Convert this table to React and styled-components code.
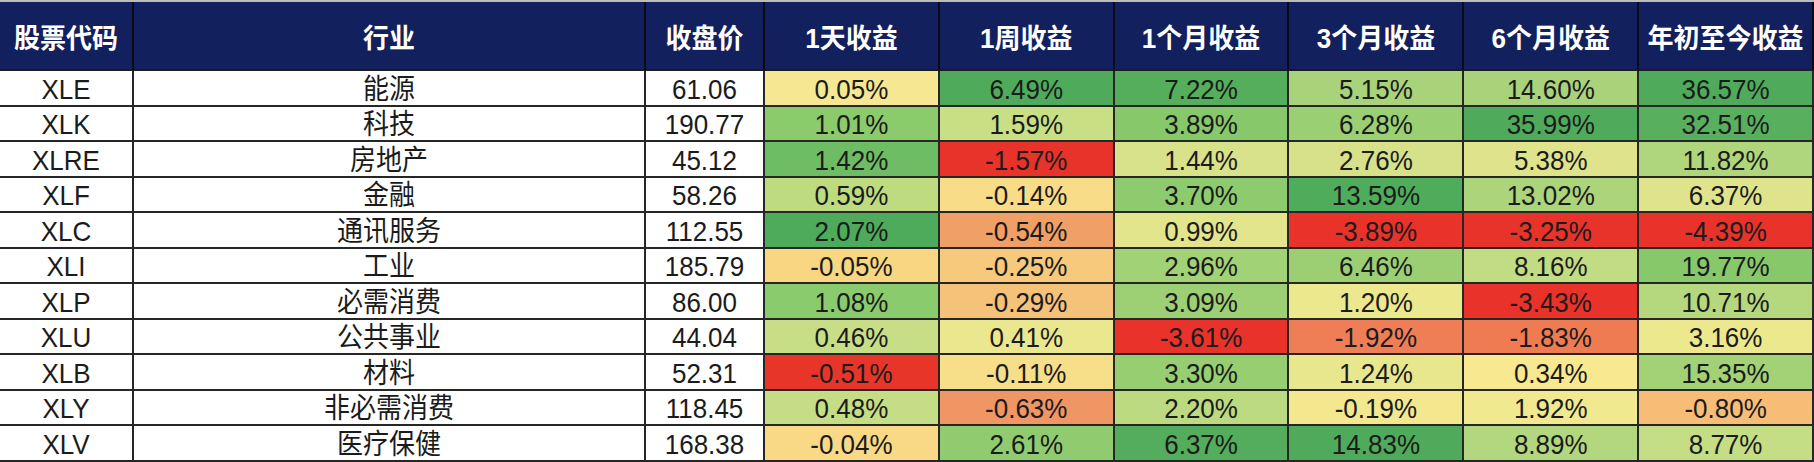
import styled, { createGlobalStyle } from "styled-components";

const GlobalStyle = createGlobalStyle`
  html, body {
    margin: 0;
    padding: 0;
    background: #ffffff;
    overflow: hidden;
  }
  body {
    font-family: "Liberation Sans", "Noto Sans CJK SC", sans-serif;
  }
`;

const COLS = "134px 512px 119px repeat(6, 1fr)";

const Table = styled.div`
  width: 1814px;
  display: flex;
  flex-direction: column;
  border-top: 2px solid #bdbdbd;
`;

const Row = styled.div`
  display: grid;
  grid-template-columns: ${COLS};
  height: ${(p) => (p.$head ? "69px" : "35.5px")};
  flex-shrink: 0;
`;

const HeadCell = styled.div`
  box-sizing: border-box;
  display: flex;
  align-items: center;
  justify-content: center;
  background: #13205e;
  color: #ffffff;
  font-size: 26px;
  font-weight: 700;
  border-right: 2px solid #0a0a14;
  border-bottom: 2px solid #1c1c1c;
  white-space: nowrap;
`;

const Cell = styled.div`
  box-sizing: border-box;
  display: flex;
  align-items: center;
  justify-content: center;
  background: ${(p) => p.$bg || "#ffffff"};
  color: #1b1b1b;
  font-size: 26px;
  line-height: 30px;
  padding-top: 2px;
  border-right: 2px solid #262626;
  border-bottom: 2px solid #262626;
  white-space: nowrap;
`;

// the source sheet renders glyphs a little taller than wide
const Label = styled.span`
  display: inline-block;
  transform: scale(1, ${(p) => (p.$head ? 1.06 : 1.08)});
`;

const headers = [
  "股票代码",
  "行业",
  "收盘价",
  "1天收益",
  "1周收益",
  "1个月收益",
  "3个月收益",
  "6个月收益",
  "年初至今收益",
];

const rows = [
  ["XLE", "能源", "61.06", [
    ["0.05%", "#f6e793"], ["6.49%", "#4fab5b"], ["7.22%", "#55ae5c"],
    ["5.15%", "#a8d37a"], ["14.60%", "#a9d37b"], ["36.57%", "#4fab5b"],
  ]],
  ["XLK", "科技", "190.77", [
    ["1.01%", "#8ccb6c"], ["1.59%", "#c9df86"], ["3.89%", "#86c86a"],
    ["6.28%", "#9acf73"], ["35.99%", "#4fab5b"], ["32.51%", "#58b05e"],
  ]],
  ["XLRE", "房地产", "45.12", [
    ["1.42%", "#6ebd64"], ["-1.57%", "#e8332a"], ["1.44%", "#d7e28a"],
    ["2.76%", "#d6e18a"], ["5.38%", "#dfe48c"], ["11.82%", "#b0d67d"],
  ]],
  ["XLF", "金融", "58.26", [
    ["0.59%", "#bedb80"], ["-0.14%", "#f8dc88"], ["3.70%", "#8ecb6e"],
    ["13.59%", "#4fac5b"], ["13.02%", "#acd47b"], ["6.37%", "#dfe48c"],
  ]],
  ["XLC", "通讯服务", "112.55", [
    ["2.07%", "#4eab5b"], ["-0.54%", "#f0a066"], ["0.99%", "#e3e58c"],
    ["-3.89%", "#e8322a"], ["-3.25%", "#e8332a"], ["-4.39%", "#e8322a"],
  ]],
  ["XLI", "工业", "185.79", [
    ["-0.05%", "#f8d682"], ["-0.25%", "#f6c97c"], ["2.96%", "#a1d276"],
    ["6.46%", "#9ccf73"], ["8.16%", "#c2dc83"], ["19.77%", "#86c86a"],
  ]],
  ["XLP", "必需消费", "86.00", [
    ["1.08%", "#8acb6d"], ["-0.29%", "#f5c27a"], ["3.09%", "#9dd074"],
    ["1.20%", "#ece88e"], ["-3.43%", "#e8322a"], ["10.71%", "#b5d87f"],
  ]],
  ["XLU", "公共事业", "44.04", [
    ["0.46%", "#c8de86"], ["0.41%", "#ebe78e"], ["-3.61%", "#e8322a"],
    ["-1.92%", "#ef7e56"], ["-1.83%", "#ef7b52"], ["3.16%", "#ece88e"],
  ]],
  ["XLB", "材料", "52.31", [
    ["-0.51%", "#e8352a"], ["-0.11%", "#f7de89"], ["3.30%", "#97ce72"],
    ["1.24%", "#e9e78d"], ["0.34%", "#f8e991"], ["15.35%", "#a2d176"],
  ]],
  ["XLY", "非必需消费", "118.45", [
    ["0.48%", "#c5dd84"], ["-0.63%", "#f09564"], ["2.20%", "#bcdb81"],
    ["-0.19%", "#f4e88f"], ["1.92%", "#f0e98f"], ["-0.80%", "#f7bd77"],
  ]],
  ["XLV", "医疗保健", "168.38", [
    ["-0.04%", "#f9d985"], ["2.61%", "#90cc6f"], ["6.37%", "#53ad5c"],
    ["14.83%", "#4fab5b"], ["8.89%", "#b3d77e"], ["8.77%", "#c5dd84"],
  ]],
];

export default function App() {
  return (
    <>
      <GlobalStyle />
      <Table>
        <Row $head>
          {headers.map((h) => (
            <HeadCell key={h}>
              <Label $head>{h}</Label>
            </HeadCell>
          ))}
        </Row>
        {rows.map(([code, sector, price, returns]) => (
          <Row key={code}>
            <Cell><Label>{code}</Label></Cell>
            <Cell><Label>{sector}</Label></Cell>
            <Cell><Label>{price}</Label></Cell>
            {returns.map(([value, color], i) => (
              <Cell key={i} $bg={color}>
                <Label>{value}</Label>
              </Cell>
            ))}
          </Row>
        ))}
      </Table>
    </>
  );
}
